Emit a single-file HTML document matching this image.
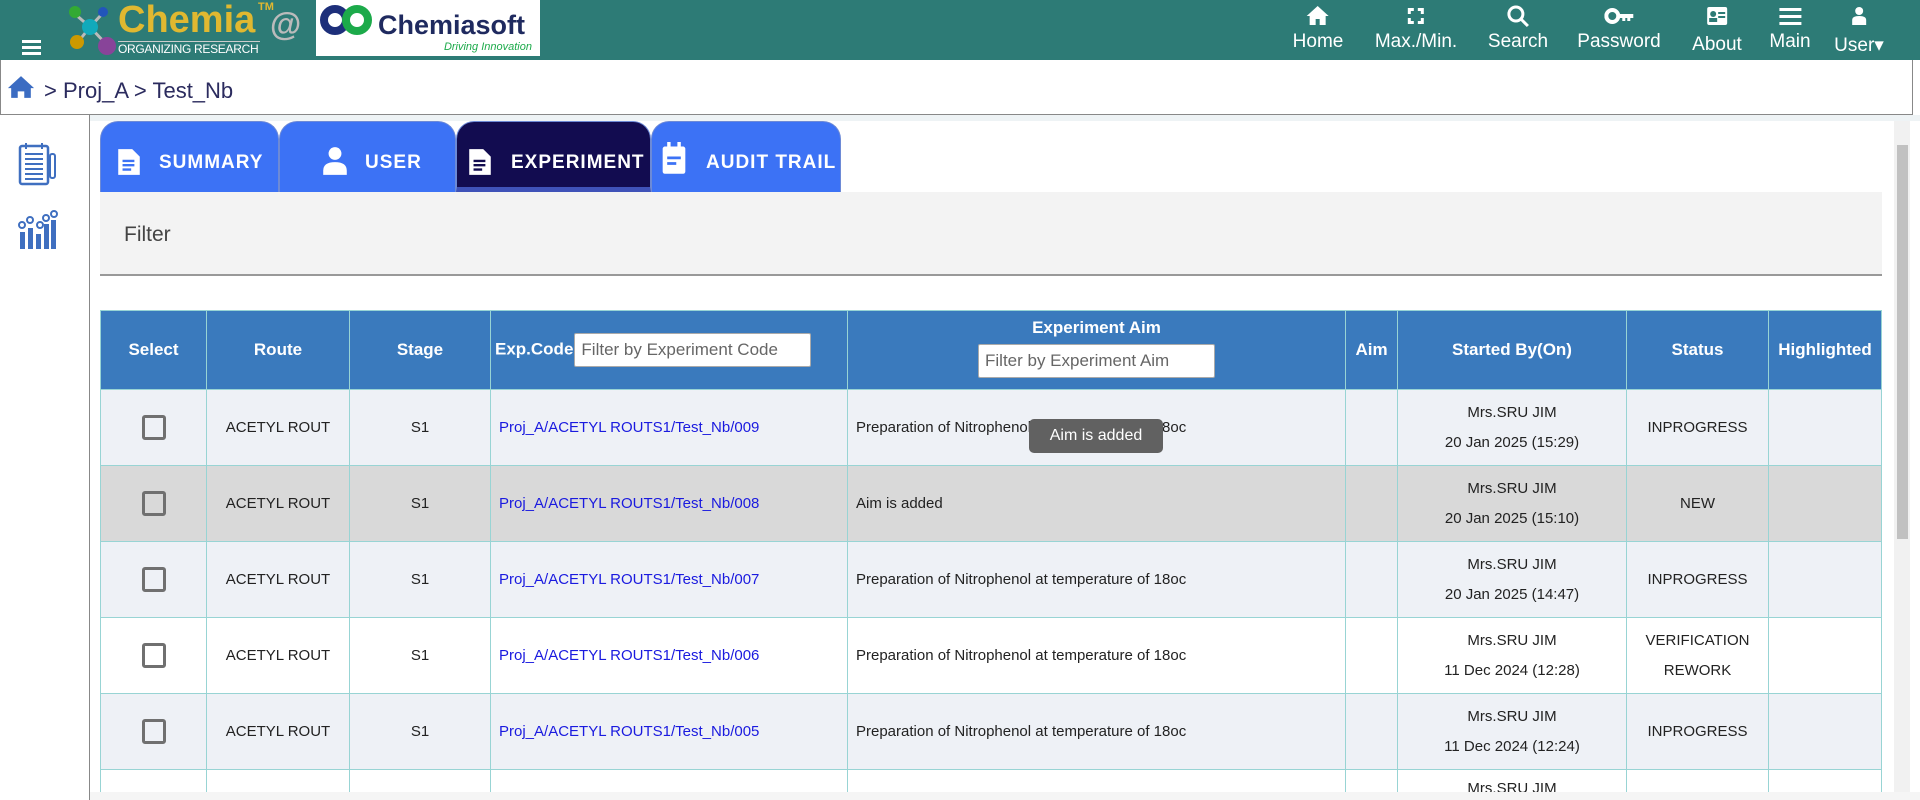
<!DOCTYPE html>
<html><head><meta charset="utf-8"><style>
*{box-sizing:border-box;margin:0;padding:0}
html{width:1920px;height:800px;overflow:hidden}
body{width:1920px;height:800px;overflow:hidden;background:#fff;font-family:"Liberation Sans",Arial,sans-serif;position:relative}
.top{position:absolute;left:0;top:0;width:1920px;height:60px;background:#2d7b76}
.nav{position:absolute;top:0;height:60px;text-align:center;color:#fff;font-size:19px;transform:translateX(-50%);white-space:nowrap}
.nav svg{display:block;margin:4px auto 0;height:24px}
.nav span{display:block;margin-top:3px}
.crumb{position:absolute;left:0;top:60px;width:1913px;height:55px;border:1px solid #888;border-top:none;background:#fff}
.side{position:absolute;left:89px;top:115px;width:1px;height:685px;background:#888}
.tab{position:absolute;top:121px;height:71px;border-radius:18px 18px 0 0;background:#3c72f5;color:#fff;font-weight:bold;font-size:19px;letter-spacing:1px;border:1px solid #6d8ad6;border-bottom:none}
.tab .t{position:absolute;top:30px}
.filter{position:absolute;left:100px;top:192px;width:1782px;height:84px;background:#f3f3f3;border-bottom:2px solid #999}
.wrap{position:absolute;left:0;top:0;width:1920px;height:792px;overflow:hidden}
table{position:absolute;left:100px;top:310px;border-collapse:collapse;table-layout:fixed;width:1781px;font-size:15px;color:#222}
th{background:#3a7abd;color:#fff;font-size:17px;height:79px;border:1px solid #98d4d4;font-weight:bold}
td{height:76px;border:1px solid #98d4d4;text-align:center}
td.l{text-align:left;padding-left:8px}
tr.last td{height:22px;border-bottom:none;vertical-align:top;line-height:18px;overflow:hidden}
a{color:#1a1adf;text-decoration:none}
tr.o td{background:#eef1f6}tr.g td{background:#d9d9d9}
.cb{display:inline-block;width:24px;height:25px;border:3px solid #707070;border-radius:3px;vertical-align:middle}
.inp{display:inline-block;background:#fff;border:1px solid #aaa;border-radius:2px;color:#666;font-weight:normal;font-size:17px;text-align:left;padding:6px 6px;vertical-align:middle}
</style></head><body>
<div class="top">
  <div style="position:absolute;left:22px;top:40px;width:19px;height:3px;background:#fff;box-shadow:0 6px 0 #fff,0 12px 0 #fff"></div>
  <svg style="position:absolute;left:60px;top:2px" width="60" height="55"><line x1="15" y1="12" x2="30" y2="25" stroke="#bbb" stroke-width="3"/><line x1="30" y1="25" x2="42" y2="12" stroke="#bbb" stroke-width="3"/><line x1="30" y1="25" x2="18" y2="40" stroke="#bbb" stroke-width="3"/><line x1="30" y1="25" x2="47" y2="43" stroke="#bbb" stroke-width="3"/><circle cx="15" cy="10" r="6" fill="#3a3"/><circle cx="43" cy="10" r="5" fill="#25b"/><circle cx="30" cy="25" r="8" fill="#1ab"/><circle cx="17" cy="40" r="7" fill="#c90"/><circle cx="47" cy="44" r="9" fill="#849"/></svg>
  <div style="position:absolute;left:118px;top:-1px;font-size:38px;line-height:42px;font-weight:bold;color:#e0b830;white-space:nowrap">Chemia</div>
  <div style="position:absolute;left:258px;top:1px;font-size:11px;font-weight:bold;color:#e0b830">TM</div>
  <div style="position:absolute;left:118px;top:41px;font-size:12px;line-height:14px;color:#fff;border-top:1px solid #ccc;width:142px;white-space:nowrap;letter-spacing:-0.3px">ORGANIZING RESEARCH</div>
  <div style="position:absolute;left:270px;top:6px;font-size:32px;font-weight:bold;color:#bbb">@</div>
  <div style="position:absolute;left:316px;top:0;width:224px;height:56px;background:#fff">
    <svg style="position:absolute;left:3px;top:3px" width="55" height="35"><circle cx="16" cy="17" r="11" fill="none" stroke="#1d2f7a" stroke-width="8"/><circle cx="38" cy="17" r="11" fill="none" stroke="#1caa4a" stroke-width="8"/></svg>
    <div style="position:absolute;left:62px;top:10px;font-size:27px;font-weight:bold;color:#1f2a5f">Chemiasoft</div>
    <div style="position:absolute;right:8px;top:41px;font-size:11px;font-style:italic;color:#1caa4a">Driving Innovation</div>
  </div>
  <div class="nav" style="left:1318px"><svg viewBox="0 0 24 24" width="24"><path d="M12 2L1 12h3v9h6v-6h4v6h6v-9h3z" fill="#fff"/></svg><span>Home</span></div>
  <div class="nav" style="left:1416px"><svg viewBox="0 0 24 24" width="24"><path d="M4 4h6v3H7v3H4zM14 4h6v6h-3V7h-3zM4 14h3v3h3v3H4zM17 14h3v6h-6v-3h3z" fill="#fff"/></svg><span>Max./Min.</span></div>
  <div class="nav" style="left:1518px"><svg viewBox="0 0 24 24" width="24"><circle cx="10" cy="10" r="7" fill="none" stroke="#fff" stroke-width="3"/><path d="M15 15l7 7" stroke="#fff" stroke-width="3"/></svg><span>Search</span></div>
  <div class="nav" style="left:1619px"><svg viewBox="0 0 30 24" width="30"><circle cx="8" cy="12" r="6" fill="none" stroke="#fff" stroke-width="4"/><path d="M14 10h15v4h-3v3h-3v-3h-2v3h-3v-3h-4z" fill="#fff"/></svg><span>Password</span></div>
  <div class="nav" style="left:1717px"><svg viewBox="0 0 24 24" width="24"><rect x="2" y="3" width="20" height="18" rx="2" fill="#fff"/><circle cx="8" cy="10" r="3" fill="#2d7b76"/><rect x="4" y="14" width="8" height="4" fill="#2d7b76"/><rect x="13" y="8" width="7" height="2" fill="#2d7b76"/><rect x="13" y="12" width="7" height="2" fill="#2d7b76"/></svg><span style="margin-top:6px">About</span></div>
  <div class="nav" style="left:1790px"><svg viewBox="0 0 24 24" width="26"><rect x="1" y="4" width="22" height="3" fill="#fff"/><rect x="1" y="11" width="22" height="3" fill="#fff"/><rect x="1" y="18" width="22" height="3" fill="#fff"/></svg><span>Main</span></div>
  <div class="nav" style="left:1859px"><svg viewBox="0 0 24 24" width="24"><circle cx="12" cy="7" r="4" fill="#fff"/><path d="M5 21v-5q0-4 7-4t7 4v5z" fill="#fff"/></svg><span style="margin-top:6px">User&#9662;</span></div>
</div>
<div class="crumb">
  <svg style="position:absolute;left:6px;top:15px" width="28" height="24" viewBox="0 0 24 22"><path d="M12 1L0 12h3v9h6v-6h6v6h6v-9h3z" fill="#3b6cc2"/></svg>
  <div style="position:absolute;left:43px;top:18px;font-size:22px;color:#2b2b5e">&gt; Proj_A &gt; Test_Nb</div>
</div>
<div class="side"></div>
<svg style="position:absolute;left:18px;top:142px" width="40" height="44" viewBox="0 0 40 44"><rect x="2" y="4" width="28" height="38" rx="2" fill="none" stroke="#3f6fc0" stroke-width="2.5"/><path d="M7 12h18M7 17h18M7 22h18M7 27h18M7 32h18M7 37h18" stroke="#3f6fc0" stroke-width="2"/><path d="M8 1v6M24 1v6" stroke="#3f6fc0" stroke-width="2"/><rect x="32" y="12" width="5" height="24" rx="2" fill="none" stroke="#3f6fc0" stroke-width="2"/></svg>
<svg style="position:absolute;left:18px;top:210px" width="40" height="40" viewBox="0 0 40 40"><rect x="2" y="22" width="5" height="17" fill="#3f6fc0"/><rect x="10" y="18" width="5" height="21" fill="#3f6fc0"/><rect x="18" y="24" width="5" height="15" fill="#3f6fc0"/><rect x="26" y="14" width="5" height="25" fill="#3f6fc0"/><rect x="33" y="10" width="5" height="29" fill="#3f6fc0"/><circle cx="4" cy="15" r="3" fill="none" stroke="#3f6fc0" stroke-width="2"/><circle cx="12" cy="10" r="3" fill="none" stroke="#3f6fc0" stroke-width="2"/><circle cx="22" cy="15" r="3" fill="none" stroke="#3f6fc0" stroke-width="2"/><circle cx="28" cy="8" r="3" fill="none" stroke="#3f6fc0" stroke-width="2"/><circle cx="36" cy="4" r="3" fill="none" stroke="#3f6fc0" stroke-width="2"/></svg>
<div style="position:absolute;left:90px;top:115px;width:1830px;height:6px;background:#eef3f5"></div>
<div class="wrap">
<div class="tab" style="left:100px;width:179px"><svg style="position:absolute;left:15px;top:26px" width="26" height="28" viewBox="0 0 24 26"><path d="M2 1h13l7 7v17H2z" fill="#fff"/><path d="M6 12h11M6 16h11M6 20h8" stroke="#3c72f5" stroke-width="2.2"/></svg><span class="t" style="left:58px">SUMMARY</span></div>
<div class="tab" style="left:279px;width:177px"><svg style="position:absolute;left:42px;top:24px" width="26" height="30" viewBox="0 0 24 28"><circle cx="12" cy="7" r="6" fill="#fff"/><path d="M1 27v-4q0-8 11-8t11 8v4z" fill="#fff"/></svg><span class="t" style="left:85px">USER</span></div>
<div class="tab" style="left:456px;width:195px;background:#120c50;border-bottom:5px solid #3f52b8"><svg style="position:absolute;left:10px;top:26px" width="26" height="28" viewBox="0 0 24 26"><path d="M2 1h13l7 7v17H2z" fill="#fff"/><path d="M6 12h11M6 16h11M6 20h8" stroke="#120c50" stroke-width="2.2"/></svg><span class="t" style="left:54px">EXPERIMENT</span></div>
<div class="tab" style="left:651px;width:190px"><svg style="position:absolute;left:8px;top:20px" width="28" height="34" viewBox="0 0 24 30"><rect x="2" y="4" width="20" height="24" rx="2" fill="#fff"/><rect x="6" y="0" width="3" height="6" fill="#fff"/><rect x="15" y="0" width="3" height="6" fill="#fff"/><path d="M6 14h12M6 19h8" stroke="#3c72f5" stroke-width="2.4"/></svg><span class="t" style="left:54px">AUDIT TRAIL</span></div>
<div class="filter"><div style="position:absolute;left:24px;top:31px;font-size:21px;color:#444">Filter</div></div>
<table>
<colgroup><col style="width:106px"><col style="width:143px"><col style="width:141px"><col style="width:357px"><col style="width:498px"><col style="width:52px"><col style="width:229px"><col style="width:142px"><col style="width:113px"></colgroup>
<tr><th>Select</th><th>Route</th><th>Stage</th><th style="text-align:left;padding-left:4px">Exp.Code<span class="inp" style="width:237px;margin-left:1px">Filter by Experiment Code</span></th><th><div style="margin-top:-4px">Experiment Aim</div><span class="inp" style="width:237px;margin-top:6px">Filter by Experiment Aim</span></th><th>Aim</th><th>Started By(On)</th><th>Status</th><th>Highlighted</th></tr>
<tr class="o"><td><span class="cb"></span></td><td>ACETYL ROUT</td><td>S1</td><td class="l"><a>Proj_A/ACETYL ROUTS1/Test_Nb/009</a></td><td class="l">Preparation of Nitrophenol at temperature of 18oc</td><td></td><td style="line-height:30px">Mrs.SRU JIM<br>20 Jan 2025 (15:29)</td><td>INPROGRESS</td><td></td></tr>
<tr class="g"><td><span class="cb"></span></td><td>ACETYL ROUT</td><td>S1</td><td class="l"><a>Proj_A/ACETYL ROUTS1/Test_Nb/008</a></td><td class="l">Aim is added</td><td></td><td style="line-height:30px">Mrs.SRU JIM<br>20 Jan 2025 (15:10)</td><td>NEW</td><td></td></tr>
<tr class="o"><td><span class="cb"></span></td><td>ACETYL ROUT</td><td>S1</td><td class="l"><a>Proj_A/ACETYL ROUTS1/Test_Nb/007</a></td><td class="l">Preparation of Nitrophenol at temperature of 18oc</td><td></td><td style="line-height:30px">Mrs.SRU JIM<br>20 Jan 2025 (14:47)</td><td>INPROGRESS</td><td></td></tr>
<tr><td><span class="cb"></span></td><td>ACETYL ROUT</td><td>S1</td><td class="l"><a>Proj_A/ACETYL ROUTS1/Test_Nb/006</a></td><td class="l">Preparation of Nitrophenol at temperature of 18oc</td><td></td><td style="line-height:30px">Mrs.SRU JIM<br>11 Dec 2024 (12:28)</td><td style="line-height:30px">VERIFICATION<br>REWORK</td><td></td></tr>
<tr class="o"><td><span class="cb"></span></td><td>ACETYL ROUT</td><td>S1</td><td class="l"><a>Proj_A/ACETYL ROUTS1/Test_Nb/005</a></td><td class="l">Preparation of Nitrophenol at temperature of 18oc</td><td></td><td style="line-height:30px">Mrs.SRU JIM<br>11 Dec 2024 (12:24)</td><td>INPROGRESS</td><td></td></tr>
<tr class="last"><td></td><td></td><td></td><td></td><td></td><td></td><td style="padding-top:10px">Mrs.SRU JIM</td><td></td><td></td></tr>
</table>
<div style="position:absolute;left:1029px;top:419px;width:134px;height:34px;background:#616161;border-radius:5px;color:#fff;font-size:16px;line-height:34px;text-align:center">Aim is added</div>
</div>
<div style="position:absolute;left:1894px;top:121px;width:16px;height:671px;background:#f1f1f1"></div>
<div style="position:absolute;left:1897px;top:145px;width:11px;height:394px;background:#c1c1c1"></div>
<div style="position:absolute;left:90px;top:792px;width:1830px;height:8px;background:#f5f5f5"></div>
</body></html>
